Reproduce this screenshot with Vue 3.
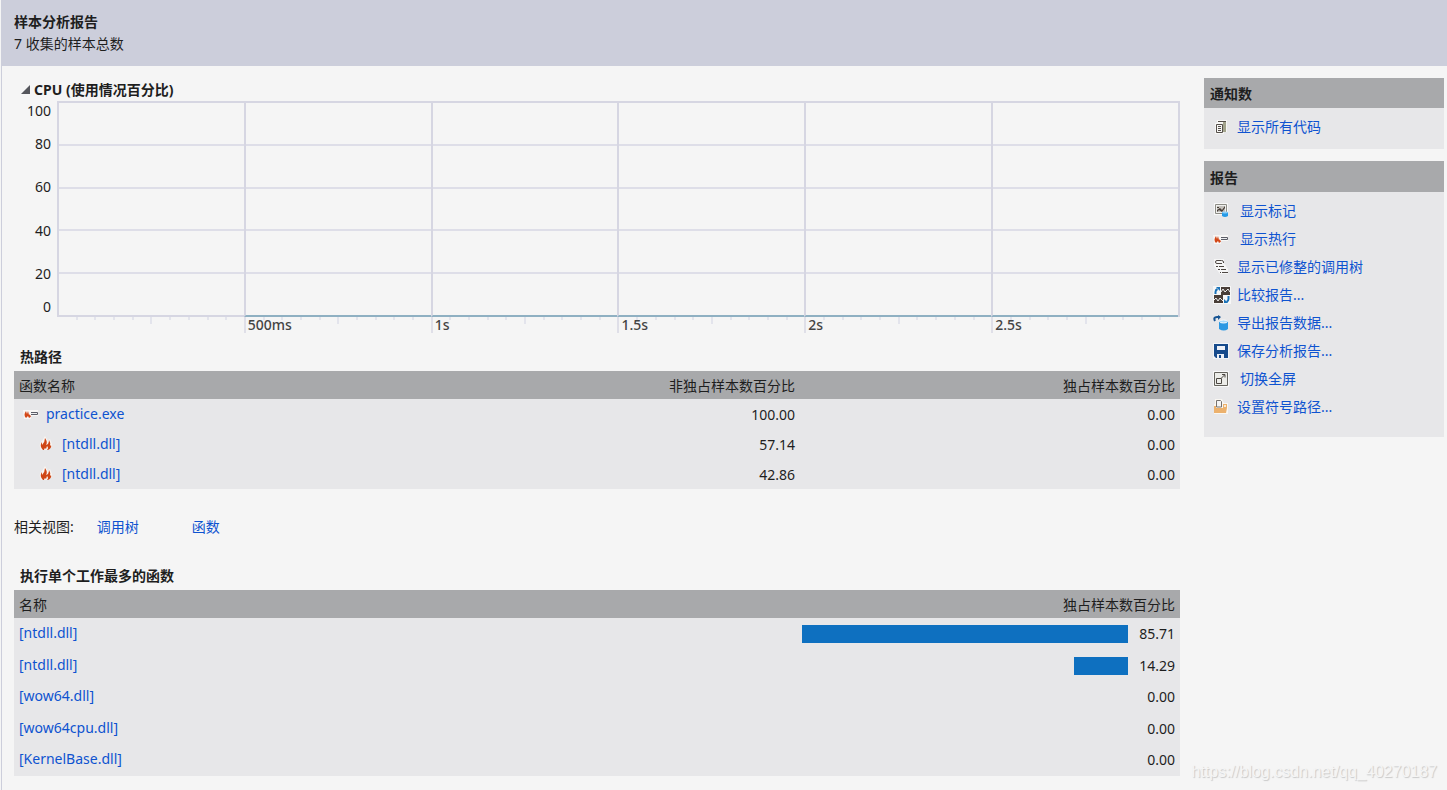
<script setup>
const yLabels = [100, 80, 60, 40, 20, 0]
const spans = ['', '500ms', '1s', '1.5s', '2s', '2.5s']

const hotPath = [
  { name: 'practice.exe', icon: 'hotline', inclusive: '100.00', exclusive: '0.00', child: false },
  { name: '[ntdll.dll]', icon: 'flame', inclusive: '57.14', exclusive: '0.00', child: true },
  { name: '[ntdll.dll]', icon: 'flame', inclusive: '42.86', exclusive: '0.00', child: true },
]

const topFunctions = [
  { name: '[ntdll.dll]', value: 85.71 },
  { name: '[ntdll.dll]', value: 14.29 },
  { name: '[wow64.dll]', value: 0 },
  { name: '[wow64cpu.dll]', value: 0 },
  { name: '[KernelBase.dll]', value: 0 },
]

const panels = [
  { title: '通知数', items: [{ label: '显示所有代码', icon: 'code' }] },
  {
    title: '报告',
    items: [
      { label: '显示标记', icon: 'marks', inset: true },
      { label: '显示热行', icon: 'hotline', inset: true },
      { label: '显示已修整的调用树', icon: 'tree' },
      { label: '比较报告...', icon: 'compare' },
      { label: '导出报告数据...', icon: 'export' },
      { label: '保存分析报告...', icon: 'save' },
      { label: '切换全屏', icon: 'full', inset: true },
      { label: '设置符号路径...', icon: 'folder' },
    ],
  },
]
</script>

<template>
  <svg class="defs" aria-hidden="true">
    <symbol id="code" viewBox="0 0 16 16">
      <path d="M2 4h9v11H2zM4 1h10v12H4z" fill="#f6f6f4" />
      <path d="M10 3h3v10h-3z" fill="#a3a48c" />
      <path d="M3.500 5.500h6v8h-6zM5 2.500h8" fill="none" stroke="#554f4a" />
      <path d="M5 7.500h3M5 9.500h3M5 11.500h3" stroke="#554f4a" />
    </symbol>
    <symbol id="marks" viewBox="0 0 16 16">
      <path d="M1 0h14v12H1z" fill="#f8f8f8" />
      <path d="M2.500 1.500h11v9h-11z" fill="#efefed" stroke="#8d8c86" />
      <path d="M4 3h8v6H4z" fill="#c5c2bd" />
      <path d="M4 4h2v1H4zM7 5l2 2 3-4v2L9 9 6 7 4 9V7z" fill="#453b35" />
      <path d="M9 9h6v4q-3 2-6 0z" fill="#259be8" />
      <ellipse cx="12" cy="9.500" rx="3" ry="1" fill="#8ed0fa" />
    </symbol>
    <symbol id="hotline" viewBox="0 0 16 16">
      <path d="M0 4h15v6H8v3H1z" fill="#f7f6f5" />
      <path d="M3 12Q0 9 3 5l1 3 1-3 1 4 1-1q-1 1 1 2 0 1-2 2l-1-2z" fill="#d34717" />
      <path d="M8 6.500h6.500v2H8" fill="#eeeef0" stroke="#5b5d67" />
    </symbol>
    <symbol id="flame" viewBox="0 0 16 16">
      <path d="M3 14Q0 8 4 5L7 0l3 5 2-2 2 5q0 4-4 6H5z" fill="#f8f5f2" />
      <path d="M5 14Q1 10 4 6v3q3-3 3-7 3 4 1 7l2-1q1-2 1-4 2 3 1 6l1-1q1 3-3 5H9q2-2 0-4l-1 3-1-1q-1 1-1 2z" fill="#cf4715" />
    </symbol>
    <symbol id="tree" viewBox="0 0 16 16">
      <path d="M1 0h10v4l4 6v5H7L1 7z" fill="#f6f6f6" />
      <path d="M10.500 4V3q0-1.500-2-1.500H4Q2.500 1.500 2.500 3T4 4.500h5" fill="none" stroke="#4e4743" />
      <path d="M3 7.500h2M6 7.500h5M5 10.500h2M8 10.500h5M7 13.500h1M9 13.500h6" stroke="#4e4743" />
    </symbol>
    <symbol id="compare" viewBox="0 0 18 18">
      <path d="M0 0h18v18H0z" fill="#f7f7f7" />
      <path d="M8 1h9v8H8zM1 9h9v8H1z" fill="#493e38" />
      <path d="m8 6 2-3 2 3 3-3 2 3M1 14l2-2 2 3 2-3 3 3" fill="none" stroke="#eee" />
      <path d="M2.500 8V6q0-2 2-3M15.500 10v3q0 2-2 3" fill="none" stroke="#1a72b8" stroke-width="2" />
      <path d="M3 1h4v4zM11 13v4h4z" fill="#1a72b8" />
    </symbol>
    <symbol id="export" viewBox="0 0 16 16">
      <path d="M2 6Q0 2 4 2h3" fill="none" stroke="#175493" stroke-width="2" />
      <path d="m5 0 3 2-3 3z" fill="#175493" />
      <path d="M6 6h9v8q-4 3-9 0z" fill="#2b98e3" />
      <ellipse cx="10.500" cy="6.500" rx="4" ry="1.500" fill="#a9dafa" stroke="#f5f8fb" />
    </symbol>
    <symbol id="save" viewBox="0 0 16 16">
      <path d="M0 0h16v16H0z" fill="#f3f5f8" />
      <path d="M1 1h14v14H3l-2-2z" fill="#174b8c" />
      <path d="M4 3h8v4H4zM4 11h7v4H4z" fill="#eef1f7" />
      <path d="M6 12h2v3H6z" fill="#174b8c" />
    </symbol>
    <symbol id="full" viewBox="0 0 16 16">
      <path d="M0 0h16v16H0z" fill="#f8f8f8" />
      <path d="M1.500 1.500h13v13h-13z" fill="#ecece8" stroke="#65635d" />
      <path d="M3.500 7.500h5v5h-5zM8.500 7l3-3M9 3.500h3v3" fill="none" stroke="#4b4641" />
    </symbol>
    <symbol id="folder" viewBox="0 0 16 16">
      <path d="M2 0h7l2 4h4v11H1V5h1z" fill="#faf7f2" />
      <path d="M3.500 8V1.500h4l1 1V8z" fill="#f4f4f4" stroke="#77736f" />
      <path d="M1 7h2v2h7V5h4v4l-1 5H1z" fill="#ecb16d" />
      <path d="M11 6h2v2h-2z" fill="#f9ead7" />
    </symbol>
  </svg>

  <div class="report">
    <header class="heading">
      <h1>样本分析报告</h1>
      <p>7 收集的样本总数</p>
    </header>

    <div class="body">
      <main>
        <section class="cpu">
          <button class="toggle" type="button" aria-expanded="true">
            <svg class="arrow" viewBox="0 0 10 10" aria-hidden="true"><path d="M9 0v9H0z" fill="#55565c" /></svg>
            CPU (使用情况百分比)
          </button>
          <div class="chart">
            <div class="y-axis"><span v-for="y in yLabels" :key="y">{{ y }}</span></div>
            <div class="plot">
              <div v-for="(label, i) in spans" :key="i" class="span" :class="{ active: i > 0 }">
                <div class="cells"><i v-for="n in 5" :key="n"></i></div>
                <div class="ticks"><i v-for="n in 10" :key="n"></i></div>
                <span v-if="label" class="time">{{ label }}</span>
              </div>
            </div>
          </div>
        </section>

        <section class="hot">
          <h2>热路径</h2>
          <table>
            <thead>
              <tr><th>函数名称</th><th class="num mid">非独占样本数百分比</th><th class="num last">独占样本数百分比</th></tr>
            </thead>
            <tbody>
              <tr v-for="(row, i) in hotPath" :key="i">
                <td>
                  <a href="#" class="entry" :class="{ child: row.child }">
                    <svg class="icon" aria-hidden="true"><use :href="'#' + row.icon" /></svg>{{ row.name }}
                  </a>
                </td>
                <td class="num">{{ row.inclusive }}</td>
                <td class="num">{{ row.exclusive }}</td>
              </tr>
            </tbody>
          </table>
        </section>

        <nav class="related">
          <span>相关视图:</span>
          <a href="#">调用树</a>
          <a href="#">函数</a>
        </nav>

        <section class="top">
          <h2>执行单个工作最多的函数</h2>
          <table>
            <thead>
              <tr><th>名称</th><th class="num wide">独占样本数百分比</th></tr>
            </thead>
            <tbody>
              <tr v-for="(row, i) in topFunctions" :key="i">
                <td><a href="#">{{ row.name }}</a></td>
                <td>
                  <div class="measure">
                    <div class="track"><div v-if="row.value" class="bar" :style="{ width: row.value + '%' }"></div></div>
                    <span>{{ row.value.toFixed(2) }}</span>
                  </div>
                </td>
              </tr>
            </tbody>
          </table>
        </section>
      </main>

      <aside>
        <section v-for="panel in panels" :key="panel.title" class="panel">
          <h2>{{ panel.title }}</h2>
          <ul>
            <li v-for="item in panel.items" :key="item.label">
              <a href="#" :class="{ inset: item.inset }">
                <svg class="icon" :class="{ large: item.icon === 'compare' }" aria-hidden="true"><use :href="'#' + item.icon" /></svg>
                <span>{{ item.label }}</span>
              </a>
            </li>
          </ul>
        </section>
      </aside>
    </div>
    <p class="watermark">https://blog.csdn.net/qq_40270187</p>
  </div>
</template>

<style>
body { background: #f5f5f5; }
</style>

<style scoped>
.defs { position: absolute; width: 0; height: 0; }
.report {
  position: relative;
  box-sizing: border-box;
  min-height: 100vh;
  margin-left: 1px;
  border-left: 1px solid #cccedb;
  color: #1e1e1e;
  background: #f5f5f5;
  font: 14px/20px "Noto Sans", "Noto Sans CJK SC", sans-serif;
}
h1, h2, p, ul { margin: 0; padding: 0; }
h1, h2 { font-size: 14px; line-height: 20px; font-weight: 700; }
a { color: #0e53d0; text-decoration: none; }
.heading { background: #cccedb; padding: 11px 12px; }
.heading h1, .heading p { line-height: 22px; }
.body { display: flex; gap: 24px; padding: 12px 3px 0 12px; }
main { flex: 1; min-width: 0; }

.toggle {
  display: flex; align-items: center; gap: 3px;
  border: 0; background: none; padding: 0; margin-left: 7px;
  font: inherit; line-height: 23px; font-weight: 700; color: inherit;
}
.arrow { width: 10px; height: 10px; }
.chart { display: flex; height: 232px; }
.y-axis {
  display: grid; grid-template-rows: 1fr 2fr 2fr 2fr 2fr 1fr; align-items: center;
  width: 37px; height: 216px; padding-right: 6px; text-align: right;
}
.y-axis span:first-child { align-self: start; }
.y-axis span:last-child { align-self: end; }
.plot { flex: 1; display: flex; border-right: 2px solid #d6d6e2; height: 216px; }
.span { flex: 1; position: relative; }
.cells {
  box-sizing: border-box; display: flex; flex-direction: column; height: 216px;
  border: solid #d6d6e2; border-width: 2px 0 2px 2px;
}
.cells i { flex: 1; }
.cells i + i { border-top: 2px solid #dedee8; }
.active .cells { border-bottom-color: #8fb0c2; }
.ticks { display: flex; }
.ticks i { flex: 1; height: 3px; border-left: 2px solid #e3e4ec; }
.ticks i:nth-child(6) { height: 7px; }
.ticks i:first-child { border-color: transparent; }
.active .ticks i:first-child { height: 16px; border-color: #dfdfe8; }
.time { position: absolute; left: 4px; top: 215px; line-height: 18px; color: #444; font-weight: 500; }

.hot { margin-top: 14px; }
h2 { padding-left: 6px; }
.hot h2, .top h2 { padding-bottom: 4px; line-height: 20px; }
table { width: 100%; border-collapse: collapse; table-layout: fixed; background: #e7e7e9; }
thead { background: #a8a9ab; }
th, td { box-sizing: border-box; }
th { height: 28px; font-weight: 400; text-align: left; padding: 2px 5px 0; }
td { padding: 0 5px; height: 30px; }
th.num, td.num { text-align: right; }
td.num { padding-top: 2px; }
.mid { width: 33%; }
.last { width: 380px; }
.icon { width: 16px; height: 16px; flex: none; }
.entry { display: flex; align-items: center; gap: 7px; padding-left: 4px; }
.child { padding-left: 19px; gap: 8px; }
.related { display: flex; padding-top: 28px; }
.related a { margin-left: 23px; }
.related a + a { margin-left: 53px; }
.top { margin-top: 29px; }
.top tbody tr:nth-child(odd) td { height: 32px; }
.top tbody tr:nth-child(even) td { height: 31px; }
.top tbody td:first-child { padding-bottom: 2px; }
.wide { width: 437px; }
.measure { display: flex; justify-content: flex-end; }
.track { flex: 1; display: flex; justify-content: flex-end; align-items: center; }
.bar { height: 18px; background: #0e70c0; }
.measure span { width: 47px; text-align: right; }

aside { width: 240px; }
.panel { background: #e7e7e9; margin-bottom: 12px; }
.panel h2 { background: #a8a9ab; padding-top: 2px; line-height: 28px; }
.panel + .panel h2 { line-height: 29px; }
.panel ul { list-style: none; padding: 5px 9px 8px; }
.panel li a { display: flex; align-items: center; gap: 8px; height: 28px; }
.panel li a.inset { gap: 11px; }
.panel + .panel ul { padding-bottom: 16px; }
.icon.large { width: 18px; height: 18px; margin-right: -2px; }
.watermark {
  position: absolute; right: 10px; bottom: 8px;
  font: 16px/20px "Liberation Sans", sans-serif;
  color: #f5f5f5; text-shadow: 1px 1px 1px #c8c8c8; white-space: nowrap;
}
</style>
